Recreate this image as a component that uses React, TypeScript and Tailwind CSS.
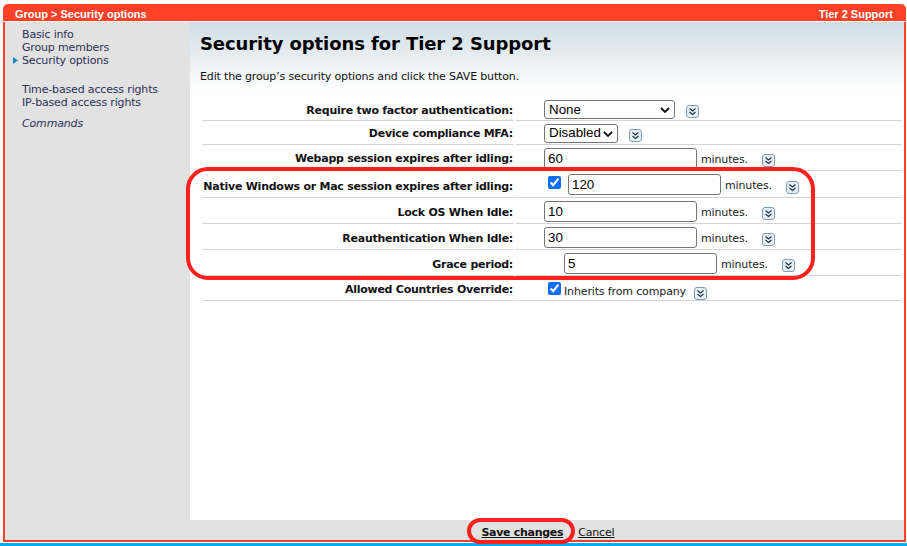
import type { ReactNode } from 'react';

// Little square button with the double chevron
const ExpandIcon = ({ className = '' }: { className?: string }) => (
    <svg width="13" height="13" viewBox="0 0 13 13" className={`shrink-0 ${className}`}>
        <rect x="0.5" y="0.5" width="12" height="12" rx="2.5" fill="#e6eff5" stroke="#7f9fb8" />
        <path d="M3.5 3.5 L6.5 6 L9.5 3.5 M3.5 7 L6.5 9.5 L9.5 7" fill="none" stroke="#25324a" strokeWidth="1.2" />
    </svg>
);

const Row = ({ label, height, labelPad = 'pt-[4px]', children }: { label: string; height: string; labelPad?: string; children: ReactNode }) => (
    <div className={`flex ${height}`}>
        <div className={`w-[312px] flex items-center justify-end pr-[1px] ${labelPad} border-b border-[#d4d4d4] font-bold text-[11px] tracking-[-0.25px] whitespace-nowrap text-[#111]`}>
            {label}
        </div>
        <div className="ml-[2px] w-[386px] flex items-center pl-[28px] pt-[1px] border-b border-[#d4d4d4] text-[11px] tracking-[-0.14px] text-[#222]">
            {children}
        </div>
    </div>
);

const TextBox = ({ value }: { value: string }) => (
    <input
        readOnly
        value={value}
        className="w-[153px] h-[21px] px-[3px] bg-white border border-[#767676] rounded-[3px] text-[13.33px] tracking-normal text-black font-['Liberation_Sans',sans-serif]"
    />
);

const Check = ({ className = '' }: { className?: string }) => (
    <input type="checkbox" readOnly checked className={`w-[13px] h-[13px] m-0 accent-[#0b6ff2] ${className}`} />
);

const Dropdown = ({ value, width }: { value: string; width: string }) => (
    <div className={`relative ${width} h-[19px] flex items-center pl-[4px] bg-white border border-[#767676] rounded-[3px] text-[13.33px] tracking-normal text-black font-['Liberation_Sans',sans-serif]`}>
        {value}
        <svg width="10" height="6" viewBox="0 0 10 6" className="absolute right-[4px] top-[6px]">
            <path d="M1 1 L5 5 L9 1" fill="none" stroke="#111" strokeWidth="1.8" />
        </svg>
    </div>
);

const Minutes = () => <span className="ml-[4px] w-[61px] pt-[4px]">minutes.</span>;

export default function App() {
    return (
        <div className="w-[907px] h-[546px] overflow-hidden relative bg-white font-['DejaVu_Sans',sans-serif] flex flex-col">
            <div className="ml-[3px] mt-[4px] w-[903px] flex-1 flex flex-col">
                <div className="h-[17px] shrink-0 bg-[#ff4127] rounded-t-[5px] flex items-center justify-between pl-[12px] pr-[13px] pt-[3px] text-white font-bold text-[11px] font-['Liberation_Sans',sans-serif]">
                    <span>Group &gt; Security options</span>
                    <span>Tier 2 Support</span>
                </div>
                <div className="mt-[1px] flex-1 flex flex-col border-l-2 border-r-2 border-b-2 border-[#ff4127]">
                    <div className="flex-1 flex">
                        <nav className="w-[185px] bg-[#e2e2e2] pt-[6px] pl-[17px] text-[11px] leading-[13px] tracking-[-0.16px] text-[#2c3058]">
                            <div>Basic info</div>
                            <div>Group members</div>
                            <div className="relative">
                                <svg width="5" height="7" viewBox="0 0 5 7" className="absolute left-[-9px] top-[3px]">
                                    <path d="M0 0 L5 3.5 L0 7 Z" fill="#1b86c4" />
                                </svg>
                                Security options
                            </div>
                            <div className="mt-[16px]">Time-based access rights</div>
                            <div>IP-based access rights</div>
                            <div className="mt-[8px] italic">Commands</div>
                        </nav>
                        <main className="flex-1 bg-gradient-to-b from-[#d0dde5] to-white to-[70px] bg-no-repeat pl-[10px]">
                            <h1 className="mt-[11px] text-[18px] leading-[22px] tracking-[-0.09px] font-bold text-black">Security options for Tier 2 Support</h1>
                            <p className="mt-[15px] text-[11px] leading-[13px] tracking-[-0.15px] text-[#111]">Edit the group’s security options and click the SAVE button.</p>
                            <div className="mt-[15px] ml-[2px]">
                                <Row label="Require two factor authentication:" height="h-[23px]">
                                    <Dropdown value="None" width="w-[131px]" />
                                    <ExpandIcon className="ml-[11px] mt-[3px]" />
                                </Row>
                                <Row label="Device compliance MFA:" height="h-[24px]">
                                    <Dropdown value="Disabled" width="w-[74px]" />
                                    <ExpandIcon className="ml-[11px] mt-[4px]" />
                                </Row>
                                <Row label="Webapp session expires after idling:" height="h-[26px]">
                                    <TextBox value="60" />
                                    <Minutes />
                                    <ExpandIcon className="mt-[5px]" />
                                </Row>
                                <Row label="Native Windows or Mac session expires after idling:" height="h-[27px]" labelPad="pt-[6px]">
                                    <Check className="ml-[4px] mr-[7px] -mt-[4px]" />
                                    <TextBox value="120" />
                                    <Minutes />
                                    <ExpandIcon className="mt-[5px]" />
                                </Row>
                                <Row label="Lock OS When Idle:" height="h-[26px]" labelPad="pt-[6px]">
                                    <TextBox value="10" />
                                    <Minutes />
                                    <ExpandIcon className="mt-[5px]" />
                                </Row>
                                <Row label="Reauthentication When Idle:" height="h-[26px]" labelPad="pt-[6px]">
                                    <TextBox value="30" />
                                    <Minutes />
                                    <ExpandIcon className="mt-[5px]" />
                                </Row>
                                <Row label="Grace period:" height="h-[26px]" labelPad="pt-[6px]">
                                    <span className="ml-[20px]" />
                                    <TextBox value="5" />
                                    <Minutes />
                                    <ExpandIcon className="mt-[5px]" />
                                </Row>
                                <Row label="Allowed Countries Override:" height="h-[25px]">
                                    <Check className="ml-[4px] mr-[3px]" />
                                    <span className="mt-[8px]">Inherits from company</span>
                                    <ExpandIcon className="ml-[8px] mt-[9px]" />
                                </Row>
                            </div>
                        </main>
                    </div>
                    <footer className="h-[20px] shrink-0 bg-[#e2e2e2] flex items-center justify-center gap-[15px] pl-[187px] pt-[6px] text-[11px] tracking-[-0.15px] text-[#111] underline">
                        <span className="font-bold tracking-[-0.3px]">Save changes</span>
                        <span>Cancel</span>
                    </footer>
                </div>
            </div>
            <div className="mt-[1px] h-[3px] shrink-0 bg-[#00b0f5]" />

            {/* red callouts drawn on top of the screenshot */}
            <div className="absolute left-[186px] top-[167px] w-[629px] h-[113px] border-[4px] border-[#ff2020] rounded-[22px]" />
            <div className="absolute left-[467px] top-[518px] w-[108px] h-[26px] border-[4px] border-[#ff2020] rounded-[13px]" />
        </div>
    );
}
